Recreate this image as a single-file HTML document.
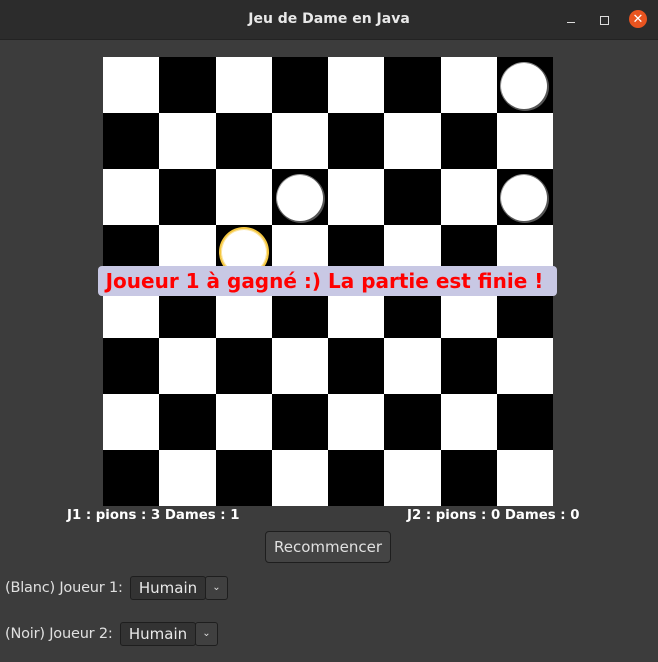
<!DOCTYPE html><html><head><style>
body{margin:0;width:658px;height:662px;background:#3c3c3c;position:relative;overflow:hidden;font-family:"Liberation Sans",sans-serif}
.tb{position:absolute;left:0;top:0;width:658px;height:39px;background:#2c2c2c;border-bottom:1px solid #232323}
.tt{position:absolute;left:0;width:658px;top:11px;text-align:center;color:#e8e8e8;font:bold 14px "DejaVu Sans",sans-serif}
.board{position:absolute;left:103px;top:57px;width:450px;height:449px;display:grid;grid-template-columns:repeat(8,1fr);grid-template-rows:repeat(8,1fr)}
.w{background:#fff}.b{background:#000}
.pc{position:absolute;width:46px;height:46px;border-radius:50%;background:#fff;box-shadow:1px 1px 0 1px #555, 0 0 0 1px #999;}
.y{box-shadow:0 0 0 2px #f5c842,inset 0 0 0 1px #fbe39a}
.ban{position:absolute;left:98px;top:266px;width:459px;height:30px;background:#c8c8e4;border-radius:4px;color:#f00;font:bold 20px "DejaVu Sans",sans-serif;line-height:31px;text-align:center;white-space:nowrap;text-indent:-6px}
.st{position:absolute;top:508px;color:#fff;font:bold 13.3px "DejaVu Sans",sans-serif}
.btn{position:absolute;left:265px;top:531px;width:126px;height:32px;box-sizing:border-box;border:1px solid #1e1e1e;border-radius:4px;background:#444;color:#e0e0e0;font:15px "DejaVu Sans",sans-serif;line-height:30px;text-align:center}
.lb{position:absolute;color:#e0e0e0;font:14.5px "DejaVu Sans",sans-serif;letter-spacing:-0.2px}
.cb{position:absolute;height:24px;box-sizing:border-box;border:1px solid #1e1e1e;border-radius:3px;background:#333;color:#e8e8e8;font:15px "DejaVu Sans",sans-serif;line-height:22px;text-align:center}
.ar{position:absolute;width:23px;height:24px;box-sizing:border-box;border:1px solid #1e1e1e;border-radius:3px;background:#404040;color:#ddd;font:10px sans-serif;line-height:22px;text-align:center}
</style></head><body>
<div class="tb"><div class="tt">Jeu de Dame en Java</div>
<div style="position:absolute;left:567px;top:22px;width:8px;height:1px;background:#ddd"></div>
<div style="position:absolute;left:600px;top:16px;width:7px;height:7px;border:1px solid #ddd"></div>
<div style="position:absolute;left:629px;top:10px;width:18px;height:18px;border-radius:50%;background:#e95420;color:#fff;font:13px sans-serif;text-align:center;line-height:18px">✕</div></div>
<div class="board">
<div class="w"></div><div class="b"></div><div class="w"></div><div class="b"></div><div class="w"></div><div class="b"></div><div class="w"></div><div class="b"></div>
<div class="b"></div><div class="w"></div><div class="b"></div><div class="w"></div><div class="b"></div><div class="w"></div><div class="b"></div><div class="w"></div>
<div class="w"></div><div class="b"></div><div class="w"></div><div class="b"></div><div class="w"></div><div class="b"></div><div class="w"></div><div class="b"></div>
<div class="b"></div><div class="w"></div><div class="b"></div><div class="w"></div><div class="b"></div><div class="w"></div><div class="b"></div><div class="w"></div>
<div class="w"></div><div class="b"></div><div class="w"></div><div class="b"></div><div class="w"></div><div class="b"></div><div class="w"></div><div class="b"></div>
<div class="b"></div><div class="w"></div><div class="b"></div><div class="w"></div><div class="b"></div><div class="w"></div><div class="b"></div><div class="w"></div>
<div class="w"></div><div class="b"></div><div class="w"></div><div class="b"></div><div class="w"></div><div class="b"></div><div class="w"></div><div class="b"></div>
<div class="b"></div><div class="w"></div><div class="b"></div><div class="w"></div><div class="b"></div><div class="w"></div><div class="b"></div><div class="w"></div>
</div>
<div class="pc" style="left:501px;top:63px"></div>
<div class="pc" style="left:277px;top:175px"></div>
<div class="pc" style="left:501px;top:175px"></div>
<div class="pc y" style="left:221px;top:229px"></div>
<div class="ban">Joueur 1 à gagné :) La partie est finie !</div>
<div class="st" style="left:67px">J1 : pions : 3 Dames : 1</div>
<div class="st" style="left:407px">J2 : pions : 0 Dames : 0</div>
<div class="btn">Recommencer</div>
<div class="lb" style="left:5px;top:580px">(Blanc) Joueur 1:</div>
<div class="cb" style="left:130px;top:576px;width:76px">Humain</div>
<div class="ar" style="left:205px;top:576px">⌄</div>
<div class="lb" style="left:5px;top:626px">(Noir) Joueur 2:</div>
<div class="cb" style="left:120px;top:622px;width:76px">Humain</div>
<div class="ar" style="left:195px;top:622px">⌄</div>
</body></html>
